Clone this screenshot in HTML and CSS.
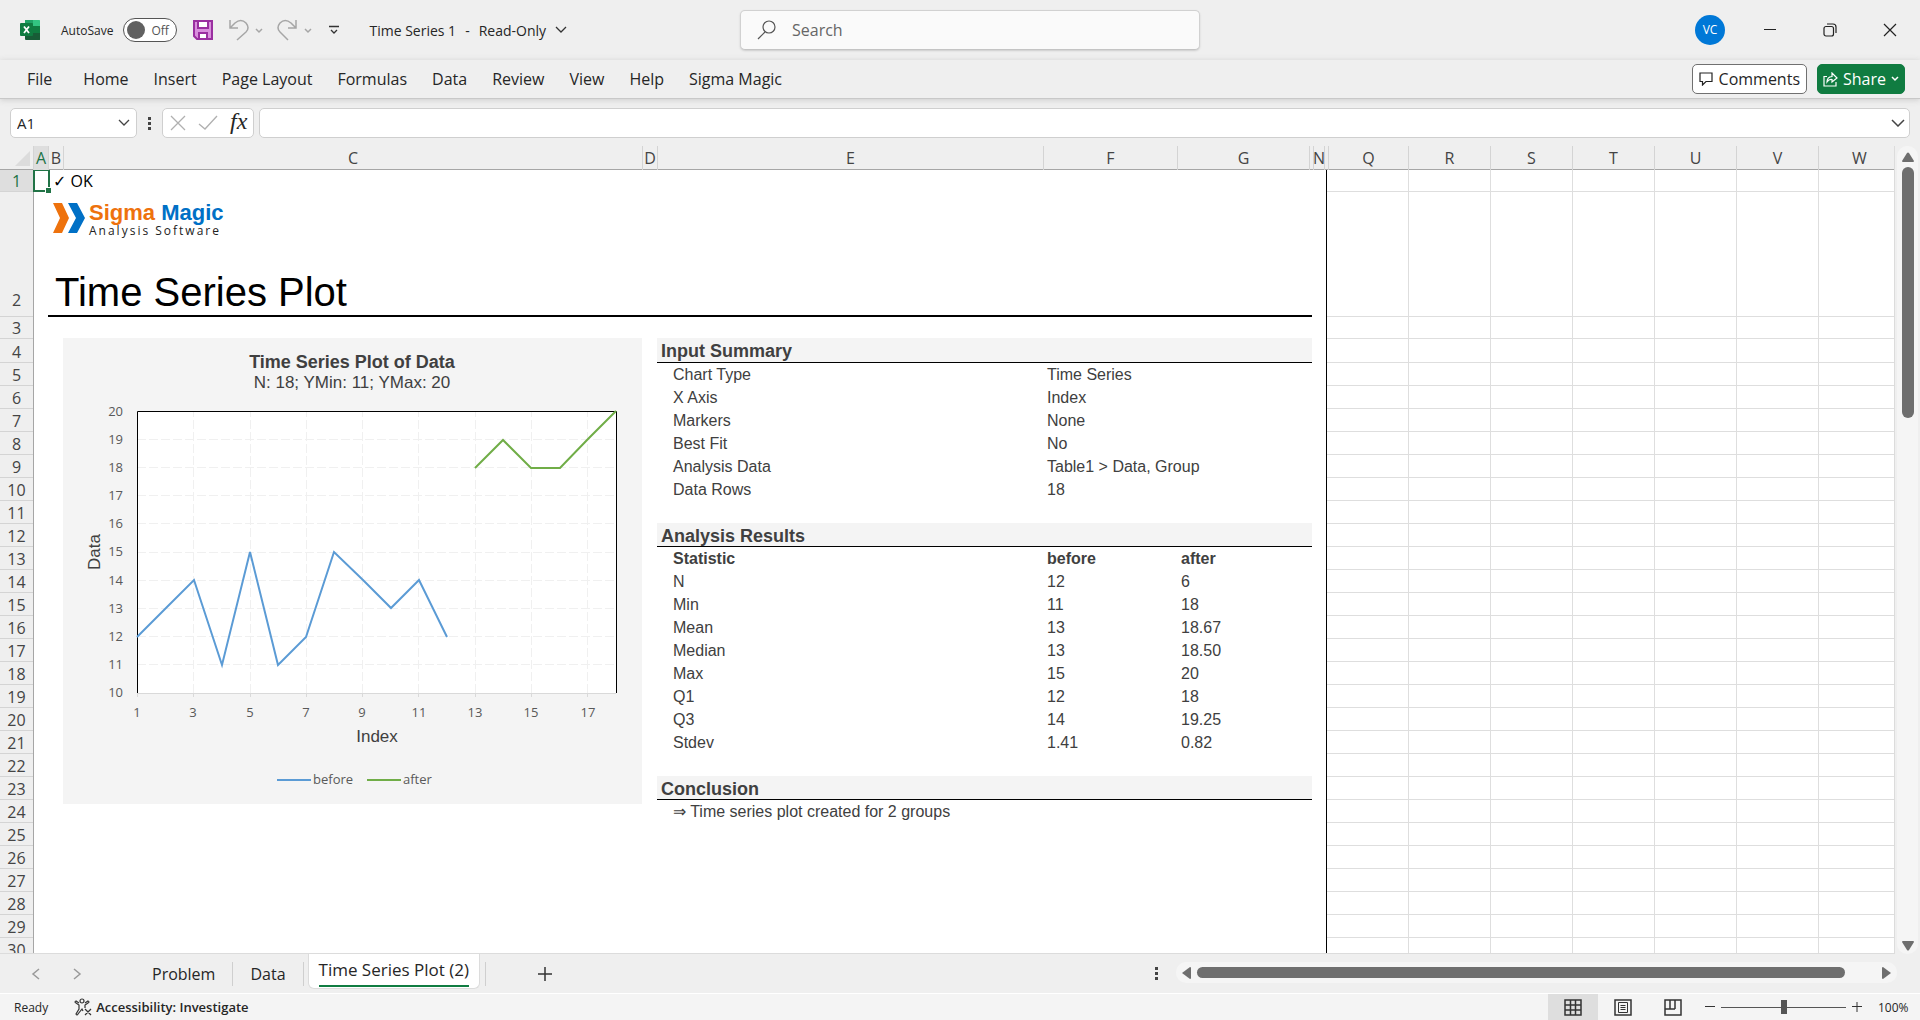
FILE: index.html
```html
<!DOCTYPE html>
<html lang="en">
<head>
    <meta charset="utf-8">
    <title>Time Series 1 - Excel</title>
    <link rel="stylesheet" href="styles.css">
</head>
<body>
    <header class="titlebar">
        <div class="quick">
            <svg class="app-icon" width="21" height="22" viewBox="1 0 21 22">
                <path fill="#21a366" d="M6 1h8v6H6z"/>
                <path fill="#33c481" d="M14 1h6.500q.5 0 .5.500V7h-7z"/>
                <path fill="#107c41" d="M14 7h7v7h-7z"/>
                <path fill="#185c37" d="M6 7h8v7h7v6.500q0 .5-.5.500H7q-1 0-1-1z"/>
                <rect x="1" y="4" width="13" height="13" rx="1" fill="#107c41"/>
                <path d="M5 7.500l5 6.500M10 7.500L5 14" stroke="#fff" stroke-width="1.800"/>
            </svg>
            <label class="autosave">AutoSave
                <input type="checkbox" class="switch">
                <span class="switch-face">Off</span>
            </label>
            <button class="icon-btn save" aria-label="Save">
                <svg width="20" height="20" viewBox="0 0 20 20" fill="#fff" stroke="#9a2fa0" stroke-width="2">
                    <path fill="#d98fdd" d="M1 1h18v18H4l-3-3z"/>
                    <path d="M5 1h10v7H5zM6 19v-6h8v6z"/>
                </svg>
            </button>
            <button class="icon-btn undo" aria-label="Undo">
                <svg width="34" height="22" viewBox="0 0 34 22" fill="none" stroke="#a6a6a6" stroke-width="1.500">
                    <path d="M1 1v8h8M1 9l5-5q6-5 11 0 4 5 0 9l-9 8"/>
                    <path d="M27 10l3 3 3-3"/>
                </svg>
            </button>
            <button class="icon-btn redo" aria-label="Redo">
                <svg width="36" height="22" viewBox="0 0 36 22" fill="none" stroke="#a6a6a6" stroke-width="1.500">
                    <path d="M19 1v8h-8M19 9l-5-5Q8-1 3 4q-4 5 0 9l8 8"/>
                    <path d="M28 10l3 3 3-3"/>
                </svg>
            </button>
            <button class="icon-btn more" aria-label="Customize Quick Access Toolbar">
                <svg width="10" height="10" viewBox="0 0 10 10" fill="none" stroke="#333" stroke-width="1.300"><path d="M0 1.500h10M2 5l3 3 3-3"/></svg>
            </button>
            <button class="doc-name">
                <span>Time Series 1</span> <span>-</span> <span>Read-Only</span>
                <svg width="12" height="8" viewBox="0 0 12 8" fill="none" stroke="#333" stroke-width="1.300"><path d="M1 1l5 5 5-5"/></svg>
            </button>
        </div>
        <label class="search">
            <svg width="20" height="20" viewBox="0 0 20 20" fill="none" stroke="#555" stroke-width="1.200"><circle cx="12" cy="7" r="6"/><path d="M8 12l-7 7"/></svg>
            <input type="text" placeholder="Search" aria-label="Search">
        </label>
        <div class="window">
            <span class="avatar">VC</span>
            <button class="win-btn" aria-label="Minimize"><svg width="14" height="14" viewBox="0 0 14 14" stroke="#222"><path d="M1 6.500h12"/></svg></button>
            <button class="win-btn" aria-label="Restore"><svg width="14" height="14" viewBox="0 0 14 14" fill="none" stroke="#222" stroke-width="1.200"><rect x="1" y="3.500" width="9.500" height="9.500" rx="2"/><path d="M4 1h6q3 0 3 3v6"/></svg></button>
            <button class="win-btn" aria-label="Close"><svg width="14" height="14" viewBox="0 0 14 14" stroke="#222" stroke-width="1.200"><path d="M1 1l12 12M13 1L1 13"/></svg></button>
        </div>
    </header>

    <nav class="ribbon">
        <a href="#" class="file">File</a>
        <a href="#">Home</a>
        <a href="#">Insert</a>
        <a href="#">Page Layout</a>
        <a href="#">Formulas</a>
        <a href="#">Data</a>
        <a href="#">Review</a>
        <a href="#">View</a>
        <a href="#">Help</a>
        <a href="#">Sigma Magic</a>
        <div class="ribbon-right">
            <button class="comments">
                <svg width="14" height="14" viewBox="0 0 14 14" fill="none" stroke="#222" stroke-width="1.200"><path d="M1 1h12v8.500H7L3.500 13V9.500H1z"/></svg>
                Comments
            </button>
            <button class="share">
                <svg width="15" height="15" viewBox="0 0 15 15" fill="none" stroke="#fff" stroke-width="1.200"><path d="M4 4.500H1V14h12v-4M4 10q0-5 5-5.500V1l5 5-5 4V7.500Q6 7 4 10z"/></svg>
                Share
                <svg class="share-more" width="8" height="6" viewBox="0 0 8 6" fill="none" stroke="#fff" stroke-width="1.500"><path d="M1 1l3 3 3-3"/></svg>
            </button>
        </div>
    </nav>

    <div class="formula-bar">
        <div class="name-box">
            <input type="text" value="A1" aria-label="Name box">
            <svg width="12" height="8" viewBox="0 0 12 8" fill="none" stroke="#444" stroke-width="1.300"><path d="M1 1l5 5 5-5"/></svg>
        </div>
        <svg class="dots" width="3" height="13" viewBox="0 0 3 13" fill="#444"><path d="M0 0h3v3H0zM0 5h3v3H0zM0 10h3v3H0z"/></svg>
        <div class="fx-box">
            <button class="icon-btn" aria-label="Cancel"><svg width="16" height="16" viewBox="0 0 16 16" stroke="#b0b0b0" stroke-width="1.300"><path d="M1 1l14 14M15 1L1 15"/></svg></button>
            <button class="icon-btn" aria-label="Enter"><svg width="20" height="16" viewBox="0 0 20 16" fill="none" stroke="#b0b0b0" stroke-width="1.300"><path d="M1 9l6 5L19 1"/></svg></button>
            <button class="icon-btn fx" aria-label="Insert function">fx</button>
        </div>
        <div class="formula">
            <input type="text" aria-label="Formula">
            <svg width="14" height="8" viewBox="0 0 14 8" fill="none" stroke="#444" stroke-width="1.500"><path d="M1 1l6 6 6-6"/></svg>
        </div>
    </div>

    <main class="workbook">
        <div class="sheet">
            <div class="col-heads">
                <span class="corner"><svg width="15" height="15" viewBox="0 0 15 15"><path d="M15 0v15H0z" fill="#dcdcdc"/></svg></span>
                <span class="active">A</span><span>B</span><span>C</span><span>D</span><span>E</span><span>F</span><span>G</span><span></span><span>N</span><span></span><span>Q</span><span>R</span><span>S</span><span>T</span><span>U</span><span>V</span><span>W</span>
            </div>
            <div class="sheet-body">
                <div class="row-heads rows">
                    <span class="active">1</span><span class="tall">2</span><span>3</span><span>4</span><span>5</span><span>6</span><span>7</span><span>8</span><span>9</span><span>10</span>
                    <span>11</span><span>12</span><span>13</span><span>14</span><span>15</span><span>16</span><span>17</span><span>18</span><span>19</span><span>20</span>
                    <span>21</span><span>22</span><span>23</span><span>24</span><span>25</span><span>26</span><span>27</span><span>28</span><span>29</span><span>30</span>
                </div>
                <div class="report">
                    <div class="selected"></div>
                    <p class="status">✓ OK</p>
                    <div class="banner">
                        <div class="logo">
                            <svg width="32" height="30" viewBox="0 0 32 30">
                                <path fill="#ee720d" d="M0 0h9l7 15-7 15H0l7-15z"/>
                                <path fill="#0070c6" d="M15 0h9l8 15-8 15h-9l8-15z"/>
                            </svg>
                            <div class="logo-text">
                                <b><span class="orange">Sigma</span> Magic</b>
                                <small>Analysis Software</small>
                            </div>
                        </div>
                        <h1>Time Series Plot</h1>
                    </div>
                    <div class="panels">
                        <svg class="chart" width="579" height="466" viewBox="0 0 579 466" role="img" aria-label="Time Series Plot of Data">
                            <text class="chart-title" x="289" y="30">Time Series Plot of Data</text>
                            <text class="chart-label" x="289" y="50">N: 18; YMin: 11; YMax: 20</text>
                            <rect x="74" y="73" width="479" height="282" fill="#fff"/>
                            <path class="gridlines" d="M74 101.500h479M74 129.500h479M74 157.500h479M74 185.500h479M74 214.500h479M74 242.500h479M74 270.500h479M74 298.500h479M74 326.500h479"/>
                            <path class="gridlines" d="M130.500 355V73M187.500 355V73M243.500 355V73M299.500 355V73M355.500 355V73M412.500 355V73M468.500 355V73M524.500 355V73"/>
                            <path class="axis" d="M74 355.500h479M74.500 355v4M130.500 355v4M187.500 355v4M243.500 355v4M299.500 355v4M355.500 355v4M412.500 355v4M468.500 355v4M524.500 355v4"/>
                            <path class="frame" d="M74.500 355V73.500h479V355"/>
                            <polyline class="before" points="74,299 103,270 131,242 159,327 187,214 215,327 243,299 271,214 300,242 328,270 356,242 384,299"/>
                            <polyline class="after" points="412,130 440,102 468,130 497,130 525,101 553,73"/>
                            <g class="ticks y-ticks">
                                <text x="60" y="78">20</text><text x="60" y="106">19</text><text x="60" y="134">18</text><text x="60" y="162">17</text><text x="60" y="190">16</text><text x="60" y="218">15</text><text x="60" y="247">14</text><text x="60" y="275">13</text><text x="60" y="303">12</text><text x="60" y="331">11</text><text x="60" y="359">10</text>
                            </g>
                            <g class="ticks x-ticks">
                                <text x="74" y="379">1</text><text x="130" y="379">3</text><text x="187" y="379">5</text><text x="243" y="379">7</text><text x="299" y="379">9</text><text x="356" y="379">11</text><text x="412" y="379">13</text><text x="468" y="379">15</text><text x="525" y="379">17</text>
                            </g>
                            <text class="chart-label" x="314" y="404">Index</text>
                            <text class="chart-label" transform="translate(37 214) rotate(-90)">Data</text>
                            <g class="ticks">
                                <path class="before" d="M214 442h34"/><text x="250" y="446">before</text>
                                <path class="after" d="M304 442h34"/><text x="340" y="446">after</text>
                            </g>
                        </svg>
                        <div class="results">
                            <h2>Input Summary</h2>
                            <table>
                                <tr><td>Chart Type</td><td colspan="2">Time Series</td></tr>
                                <tr><td>X Axis</td><td colspan="2">Index</td></tr>
                                <tr><td>Markers</td><td colspan="2">None</td></tr>
                                <tr><td>Best Fit</td><td colspan="2">No</td></tr>
                                <tr><td>Analysis Data</td><td colspan="2">Table1 &gt; Data, Group</td></tr>
                                <tr><td>Data Rows</td><td colspan="2">18</td></tr>
                            </table>
                            <h2>Analysis Results</h2>
                            <table>
                                <tr><th>Statistic</th><th>before</th><th>after</th></tr>
                                <tr><td>N</td><td>12</td><td>6</td></tr>
                                <tr><td>Min</td><td>11</td><td>18</td></tr>
                                <tr><td>Mean</td><td>13</td><td>18.67</td></tr>
                                <tr><td>Median</td><td>13</td><td>18.50</td></tr>
                                <tr><td>Max</td><td>15</td><td>20</td></tr>
                                <tr><td>Q1</td><td>12</td><td>18</td></tr>
                                <tr><td>Q3</td><td>14</td><td>19.25</td></tr>
                                <tr><td>Stdev</td><td>1.41</td><td>0.82</td></tr>
                            </table>
                            <h2>Conclusion</h2>
                            <p>⇒ Time series plot created for 2 groups</p>
                        </div>
                    </div>
                </div>
                <div class="cells rows">
                    <i></i><i></i><i></i><i></i><i></i><i></i><i></i><i></i><i></i><i></i>
                    <i></i><i></i><i></i><i></i><i></i><i></i><i></i><i></i><i></i><i></i>
                    <i></i><i></i><i></i><i></i><i></i><i></i><i></i><i></i><i></i><i></i>
                </div>
            </div>
        </div>
        <div class="v-scroll">
            <svg width="12" height="10" viewBox="0 0 12 10" fill="#6e6e6e"><path d="M5 1q1-1 2 0l5 8q0 1-1 1H1Q0 10 0 9z"/></svg>
            <div class="thumb"></div>
            <svg class="down" width="12" height="10" viewBox="0 0 12 10" fill="#6e6e6e"><path d="M5 9q1 1 2 0l5-8q0-1-1-1H1Q0 0 0 1z"/></svg>
        </div>
    </main>

    <div class="tabs-bar">
        <button class="icon-btn tab-prev" aria-label="Previous sheet"><svg width="9" height="12" viewBox="0 0 9 12" fill="none" stroke="#999" stroke-width="1.500"><path d="M8 1L2 6l6 5"/></svg></button>
        <button class="icon-btn tab-next" aria-label="Next sheet"><svg width="9" height="12" viewBox="0 0 9 12" fill="none" stroke="#999" stroke-width="1.500"><path d="M1 1l6 5-6 5"/></svg></button>
        <div class="tabs">
            <button class="tab">Problem</button>
            <button class="tab">Data</button>
            <button class="tab current"><span>Time Series Plot (2)</span></button>
            <button class="add" aria-label="New sheet"><svg width="14" height="14" viewBox="0 0 14 14" stroke="#333" stroke-width="1.500"><path d="M7 0v14M0 7h14"/></svg></button>
        </div>
        <svg class="dots" width="3" height="13" viewBox="0 0 3 13" fill="#444"><path d="M0 0h3v3H0zM0 5h3v3H0zM0 10h3v3H0z"/></svg>
        <div class="h-scroll">
            <svg width="9" height="12" viewBox="0 0 9 12" fill="#6e6e6e"><path d="M0 6l8-6q1 0 1 1v10q0 1-1 1z"/></svg>
            <div class="thumb"></div>
            <svg width="9" height="12" viewBox="0 0 9 12" fill="#6e6e6e"><path d="M9 6L1 0Q0 0 0 1v10q0 1 1 1z"/></svg>
        </div>
    </div>

    <footer class="statusbar">
        <span>Ready</span>
        <button class="access">
            <svg width="18" height="18" viewBox="0 0 18 18" fill="none" stroke="#333" stroke-width="1.200">
                <circle cx="8" cy="3" r="2"/>
                <path d="M5 5L2 3Q0 4 2 5l3 2v4l-3 5q1 2 2 0l4-5 1 2M11 5l3-2q2 1 0 2l-3 2v3M11 11l6 6M17 11l-6 6"/>
            </svg>
            Accessibility: Investigate
        </button>
        <div class="views">
            <button class="view on" aria-label="Normal"><svg width="18" height="17" viewBox="0 0 18 17" fill="none" stroke="#333" stroke-width="1.500"><path d="M1 1h16v15H1zM6.500 1v15M11.500 1v15M1 6h16M1 11h16"/></svg></button>
            <button class="view" aria-label="Page layout"><svg width="18" height="17" viewBox="0 0 18 17" fill="none" stroke="#333" stroke-width="1.500"><path d="M1 1h16v15H1z"/><path stroke-width="1" d="M4.500 3.500h9v10h-9zM6.500 6.500h5M6.500 8.500h5M6.500 10.500h5"/></svg></button>
            <button class="view" aria-label="Page break preview"><svg width="18" height="17" viewBox="0 0 18 17" fill="none" stroke="#333" stroke-width="1.500"><path d="M1 1h16v15H1zM6 1v9M11 1v9M1 10h10"/></svg></button>
        </div>
        <button class="icon-btn" aria-label="Zoom out"><svg width="10" height="10" viewBox="0 0 10 10" stroke="#333"><path d="M0 4.500h10"/></svg></button>
        <input type="range" class="zoom" min="0" max="100" value="50" aria-label="Zoom">
        <button class="icon-btn" aria-label="Zoom in"><svg width="10" height="10" viewBox="0 0 10 10" stroke="#333"><path d="M0 4.500h10M5 0v10"/></svg></button>
        <span class="percent">100%</span>
    </footer>
</body>
</html>
```
FILE: styles.css
```css
* {
    box-sizing: border-box;
}

html, body {
    margin: 0;
    padding: 0;
}

body {
    display: flex;
    flex-direction: column;
    height: 100vh;
    overflow: hidden;
    background: #efefef;
    color: #262626;
    font-family: 'Open Sans', 'Noto Sans', sans-serif;
    font-size: 16px;
}

button, input {
    font: inherit;
    color: inherit;
    border: none;
    background: none;
    padding: 0;
    margin: 0;
}

svg { display: block; }

.icon-btn { display: flex; align-items: center; }

/* Title bar */
.titlebar {
    display: grid;
    grid-template-columns: 1fr 460px 1fr;
    gap: 20px;
    height: 60px;
    flex: none;
    padding-left: 20px;
}

.quick { display: flex; align-items: center; }
.quick, .autosave { font-size: 12px; white-space: nowrap; }
.autosave { display: flex; align-items: center; gap: 10px; margin-left: 20px; position: relative; }
.switch { position: absolute; right: 0; width: 54px; height: 24px; opacity: 0; }

.switch-face {
    display: flex;
    align-items: center;
    gap: 6px;
    width: 54px;
    height: 24px;
    padding-left: 3px;
    border: 1px solid #555;
    border-radius: 12px;
    background: #fff;
    color: #555;
}

.switch-face::before {
    content: "";
    width: 18px;
    height: 18px;
    border-radius: 50%;
    background: #616161;
}

.save { margin-left: 16px; }
.undo { margin-left: 16px; }
.redo { margin-left: 14px; }
.more { margin-left: 16px; }
.doc-name { display: flex; align-items: center; gap: 9px; margin-left: 30px; font-size: 14px; }

.search {
    display: flex;
    align-items: center;
    gap: 15px;
    height: 40px;
    margin-top: 10px;
    padding-left: 16px;
    border: 1px solid #d1d1d1;
    border-bottom-color: #c4c4c4;
    border-radius: 5px;
    background: #fafafa;
    box-shadow: 0 1px 2px #ccc;
}

.search input { flex: 1; outline: none; }
.search input::placeholder { color: #666; opacity: 1; }

.window { display: flex; align-items: center; justify-content: flex-end; }

.avatar {
    width: 30px;
    height: 30px;
    margin-right: 15px;
    border-radius: 50%;
    background: #0078d7;
    color: #fff;
    font-size: 12px;
    line-height: 30px;
    text-align: center;
}

.win-btn { display: flex; justify-content: center; width: 60px; }

/* Ribbon tabs */
.ribbon {
    display: flex;
    align-items: center;
    gap: 1px;
    height: 39px;
    flex: none;
    padding: 0 15px;
    border-bottom: 1px solid #c8c8c8;
    box-shadow: 0 1px 6px #ccc;
}

.ribbon a {
    padding: 0 12px;
    color: #262626;
    line-height: 40px;
    text-decoration: none;
    white-space: nowrap;
}

.ribbon .file { margin-right: 6px; }
.ribbon-right { display: flex; gap: 10px; margin-left: auto; }

.comments, .share {
    display: flex;
    align-items: center;
    gap: 6px;
    height: 30px;
    padding: 0 6px;
    border: 1px solid #707070;
    border-radius: 5px;
    background: #fff;
}

.share { gap: 5px; padding: 0 5px; border-color: #107c41; background: #107c41; color: #fff; }

/* Formula bar */
.formula-bar {
    display: flex;
    height: 47px;
    flex: none;
    padding: 9px 10px 8px;
}

.name-box, .fx-box, .formula {
    display: flex;
    align-items: center;
    height: 30px;
    border: 1px solid #cfcfcf;
    border-radius: 5px;
    background: #fff;
}

.name-box { width: 127px; padding: 0 6px; }
.name-box input { flex: 1; width: 80px; font-size: 15px; }
.dots { flex: none; align-self: center; }
.formula-bar .dots { margin: 0 11px; }
.fx-box { gap: 12px; width: 92px; padding: 0 7px; }
.fx { margin-bottom: 4px; font-family: 'Liberation Serif', serif; font-size: 24px; font-style: italic; }
.formula { flex: 1; margin-left: 5px; padding: 0 4px; }
.formula input { flex: 1; }

/* Worksheet */
.workbook {
    display: flex;
    flex: 1;
    min-height: 0;
}

.sheet {
    display: flex;
    flex-direction: column;
    flex: 1;
    min-width: 0;
    overflow: hidden;
    border-right: 1px solid #dcdcdc;
    border-bottom: 1px solid #dcdcdc;
}

.col-heads {
    display: grid;
    grid-template-columns: 34px 15px 15px 579px 15px 386px 134px 132px 4px 11px 4px 80px repeat(5, 82px) minmax(82px, 1fr);
    height: 24px;
    flex: none;
    border-bottom: 1px solid #a6a6a6;
    color: #444;
    line-height: 24px;
    text-align: center;
}

.col-heads span {
    display: flex;
    justify-content: center;
    border-right: 1px solid #d4d4d4;
}

.col-heads .corner { padding: 5px 3px 0 14px; }
.col-heads .active { background: #dedede; color: #217346; }

.sheet-body { display: flex; flex: 1; min-height: 0; overflow: hidden; background: #fff; }

.rows {
    display: grid;
    grid-template-rows: 22px 125px 22px 24px repeat(26, 23px);
}

.row-heads {
    width: 34px;
    flex: none;
    height: max-content;
    border-right: 1px solid #a6a6a6;
    background: #efefef;
    color: #444;
}

.row-heads span {
    display: flex;
    align-items: flex-end;
    justify-content: center;
    border-bottom: 1px solid #d4d4d4;
    line-height: 20px;
}

.row-heads .tall { padding-bottom: 6px; }
.row-heads .active { background: #dedede; color: #217346; }

.cells {
    flex: 1;
    height: max-content;
    border-left: 1px solid #000;
    background: repeating-linear-gradient(to right, transparent 0 81px, #dedede 81px 82px);
}

.cells i { border-bottom: 1px solid #dedede; }

.report {
    position: relative;
    width: 1292px;
    flex: none;
    padding: 0 14px;
    color: #404040;
    font-family: 'Liberation Sans', Arial, sans-serif;
}

/* cursor frame over cell A1 */
.selected {
    position: absolute;
    top: -1px;
    left: -1px;
    width: 17px;
    height: 23px;
    border: 2px solid #217346;
}

.selected::after {
    content: "";
    position: absolute;
    right: -3px;
    bottom: -3px;
    width: 5px;
    height: 5px;
    background: #217346;
    outline: 1px solid #fff;
}

.status {
    height: 22px;
    margin: 0;
    padding-left: 5px;
    color: #000;
    font-family: 'Open Sans', 'DejaVu Sans', sans-serif;
    line-height: 22px;
}

.banner {
    display: flex;
    flex-direction: column;
    justify-content: space-between;
    height: 125px;
    padding-top: 11px;
    border-bottom: 2px solid #000;
}

.logo { display: flex; gap: 4px; padding-left: 5px; }
.logo b { display: block; color: #0070c6; font-size: 22px; line-height: 20px; }
.logo .orange { color: #ee720d; }
.logo small { display: block; color: #222; font-family: 'Open Sans', sans-serif; font-size: 12px; line-height: 15px; letter-spacing: 2px; }

h1 {
    margin: 0;
    padding-left: 7px;
    color: #000;
    font-size: 40px;
    font-weight: normal;
    line-height: 46px;
}

.panels { display: flex; gap: 15px; padding: 21px 0 0 15px; }
.chart { flex: none; background: #f4f4f4; }
.chart text { text-anchor: middle; fill: #404040; }
.chart .chart-title { font-size: 18px; font-weight: bold; }
.chart .chart-label { font-size: 17px; }
.chart .ticks text { fill: #595959; font-family: 'Open Sans', sans-serif; font-size: 13px; text-anchor: start; }
.chart .y-ticks text { text-anchor: end; }
.chart .x-ticks text { text-anchor: middle; }
.gridlines { stroke: #f0f0f0; stroke-dasharray: 9 3; }
.axis { stroke: #d9d9d9; }
.frame { fill: none; stroke: #000; }
.before { fill: none; stroke: #5b9bd5; stroke-width: 2; }
.after { fill: none; stroke: #70ad47; stroke-width: 2; }

.results { flex: 1; }
.results h2 {
    height: 25px;
    margin: 0;
    padding-left: 4px;
    border-bottom: 1px solid #000;
    background: #f4f4f4;
    font-size: 18px;
    line-height: 26px;
}

.results h2 ~ h2 { height: 24px; margin-top: 22px; }
.results table { width: 100%; table-layout: fixed; border-collapse: collapse; }
.results tr { height: 23px; }
.results td, .results th { padding: 0 0 0 3px; font-size: 16px; line-height: 23px; text-align: left; }
.results td:first-child, .results th:first-child { width: 387px; padding-left: 16px; }
.results th:nth-child(2) { width: 134px; }
.results p { margin: 0; padding-left: 16px; line-height: 23px; }

.thumb { background: #6e6e6e; border-radius: 6px; }

.v-scroll {
    display: flex;
    flex-direction: column;
    align-items: center;
    width: 21px;
    margin: 0 2px;
    padding: 6px 0 3px;
    border-radius: 10px;
    background: #f5f5f5;
}

.v-scroll .thumb { width: 12px; height: 251px; margin-top: 5px; }
.v-scroll .down { margin-top: auto; }

/* Sheet tabs */
.tabs-bar {
    display: flex;
    height: 39px;
    flex: none;
    padding-right: 23px;
}

.tab-prev { margin: 0 33px 0 31px; }
.tabs { display: flex; align-items: center; flex: 1; margin-left: 53px; }

.tab {
    height: 24px;
    padding: 0 17px;
    border-right: 1px solid #cfcfcf;
    line-height: 24px;
    white-space: nowrap;
}

.tab.current {
    align-self: flex-start;
    height: 35px;
    margin-left: 4px;
    padding: 0 10px;
    border: 1px solid #dcdcdc;
    border-top: none;
    border-radius: 0 0 6px 6px;
    background: #fff;
    font-size: 17px;
    font-weight: 500;
}

.tab.current span { display: block; height: 31px; border-bottom: 2px solid #107c41; line-height: 28px; }
.add { height: 24px; margin-left: 5px; padding-left: 52px; border-left: 1px solid #cfcfcf; }

.h-scroll {
    display: flex;
    align-items: center;
    width: 721px;
    height: 21px;
    margin: 8px 0 0 18px;
    padding: 0 6px;
    border-radius: 10px;
    background: #f5f5f5;
}

.h-scroll .thumb { flex: 1; height: 11px; margin: 0 37px 0 6px; }

/* Status bar */
.statusbar {
    display: flex;
    align-items: center;
    height: 27px;
    flex: none;
    padding: 0 10px 0 14px;
    border-top: 1px solid #fff;
    background: #f4f4f4;
    font-size: 12px;
}

.access { display: flex; align-items: center; gap: 4px; margin-left: 26px; font-size: 13px; font-weight: 600; }
.views { display: flex; align-self: stretch; margin: 0 7px 0 auto; }
.view { display: flex; align-items: center; justify-content: center; width: 50px; }
.view.on { background: #dedede; }

.zoom { width: 125px; height: 16px; margin: 0 6px; appearance: none; }
.zoom::-webkit-slider-runnable-track { height: 1px; background: #555; }
.zoom::-webkit-slider-thumb { width: 6px; height: 14px; margin-top: -7px; appearance: none; background: #555; }
.percent { width: 32px; margin-left: 16px; }
```
